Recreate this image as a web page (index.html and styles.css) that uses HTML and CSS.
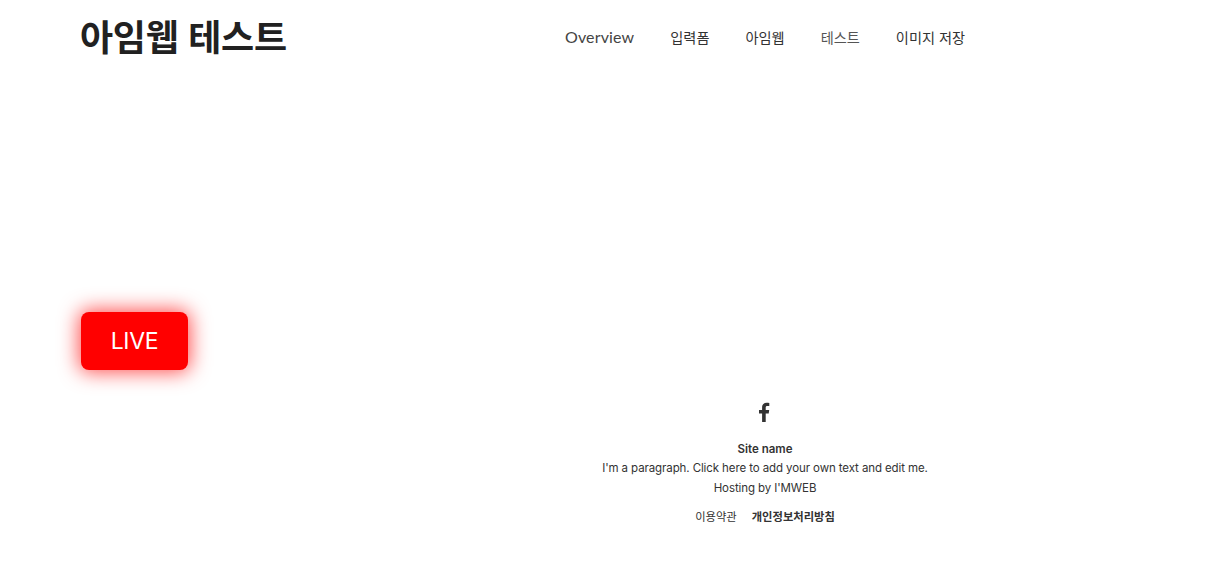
FILE: index.html
```html
<!DOCTYPE html>
<html lang="ko">
<head>
<meta charset="utf-8">
<title>아임웹 테스트</title>
<link rel="stylesheet" href="styles.css">
</head>
<body>
<header class="site-header">
  <a class="logo" href="#">아임웹 테스트</a>
  <nav class="nav">
    <a class="nav-link nav-latin" href="#">Overview</a>
    <a class="nav-link" href="#">입력폼</a>
    <a class="nav-link" href="#">아임웹</a>
    <a class="nav-link nav-active" href="#">테스트</a>
    <a class="nav-link" href="#">이미지 저장</a>
  </nav>
</header>
<main class="main">
  <a class="live" href="#">LIVE</a>
</main>
<footer class="footer">
  <a class="fb" href="#" aria-label="Facebook">
    <svg viewBox="0 0 12 20" width="12" height="20"><path d="M7.7 20v-8.6h3l.5-3.500H7.700V5.700c0-1 .3-1.700 1.700-1.700h1.900V.9C11 .8 9.900.7 8.700.7 6 .7 4.100 2.300 4.100 5.300v2.600H1v3.500h3.100V20z"/></svg>
  </a>
  <p class="site-name">Site name</p>
  <p class="foot-line">I'm a paragraph. Click here to add your own text and edit me.</p>
  <p class="foot-line">Hosting by I'MWEB</p>
  <div class="legal">
    <a href="#">이용약관</a>
    <a class="legal-strong" href="#">개인정보처리방침</a>
  </div>
</footer>
</body>
</html>
```
FILE: styles.css
```css
* { box-sizing: border-box; }
html, body { margin: 0; padding: 0; }
body {
  height: 588px;
  overflow: hidden;
  background: #fff;
  color: #212121;
  font-family: Inter, "Noto Sans CJK KR", sans-serif;
}
a { color: inherit; text-decoration: none; }
p { margin: 0; }

.site-header {
  display: flex;
  align-items: flex-start;
  height: 72px;
  padding-left: 80px;
}
.logo {
  width: 485px;
  font-family: "Noto Sans CJK KR", sans-serif;
  font-size: 36px;
  font-weight: 700;
  line-height: 70px;
  letter-spacing: -0.3px;
  color: #212121;
}
.nav { display: flex; gap: 36px; align-items: center; padding-top: 27px; }
.nav-link {
  font-family: "Noto Sans CJK KR", sans-serif;
  font-size: 14.200px;
  line-height: 20px;
  color: #333;
}
.nav-latin { font-family: Lato, sans-serif; font-size: 16px; letter-spacing: 0.15px; color: #444; }
.nav-active { color: #555; }

.main { padding: 240px 0 0 81px; height: 314px; }
.live {
  display: flex;
  align-items: center;
  justify-content: center;
  width: 107px;
  height: 58px;
  border-radius: 8px;
  background: #ff0000;
  box-shadow: 0 0 20px 2px rgba(255, 0, 0, 0.7);
  color: #fff;
  font-size: 23px;
  letter-spacing: -0.3px;
}

.footer {
  display: flex;
  flex-direction: column;
  align-items: center;
  padding: 16px 0 0 317px;
  font-size: 11.500px;
  color: #333;
}
.fb { display: block; height: 20px; margin: 0 2px 17px 0; }
.fb svg { display: block; fill: #333; }
.site-name { font-weight: 600; line-height: 20px; }
.foot-line { line-height: 19.500px; letter-spacing: -0.1px; }
.legal {
  display: flex;
  gap: 15px;
  margin-top: 8px;
  font-family: "Noto Sans CJK KR", sans-serif;
  font-size: 11.300px;
  line-height: 20px;
}
.legal-strong { font-weight: 700; }
```
